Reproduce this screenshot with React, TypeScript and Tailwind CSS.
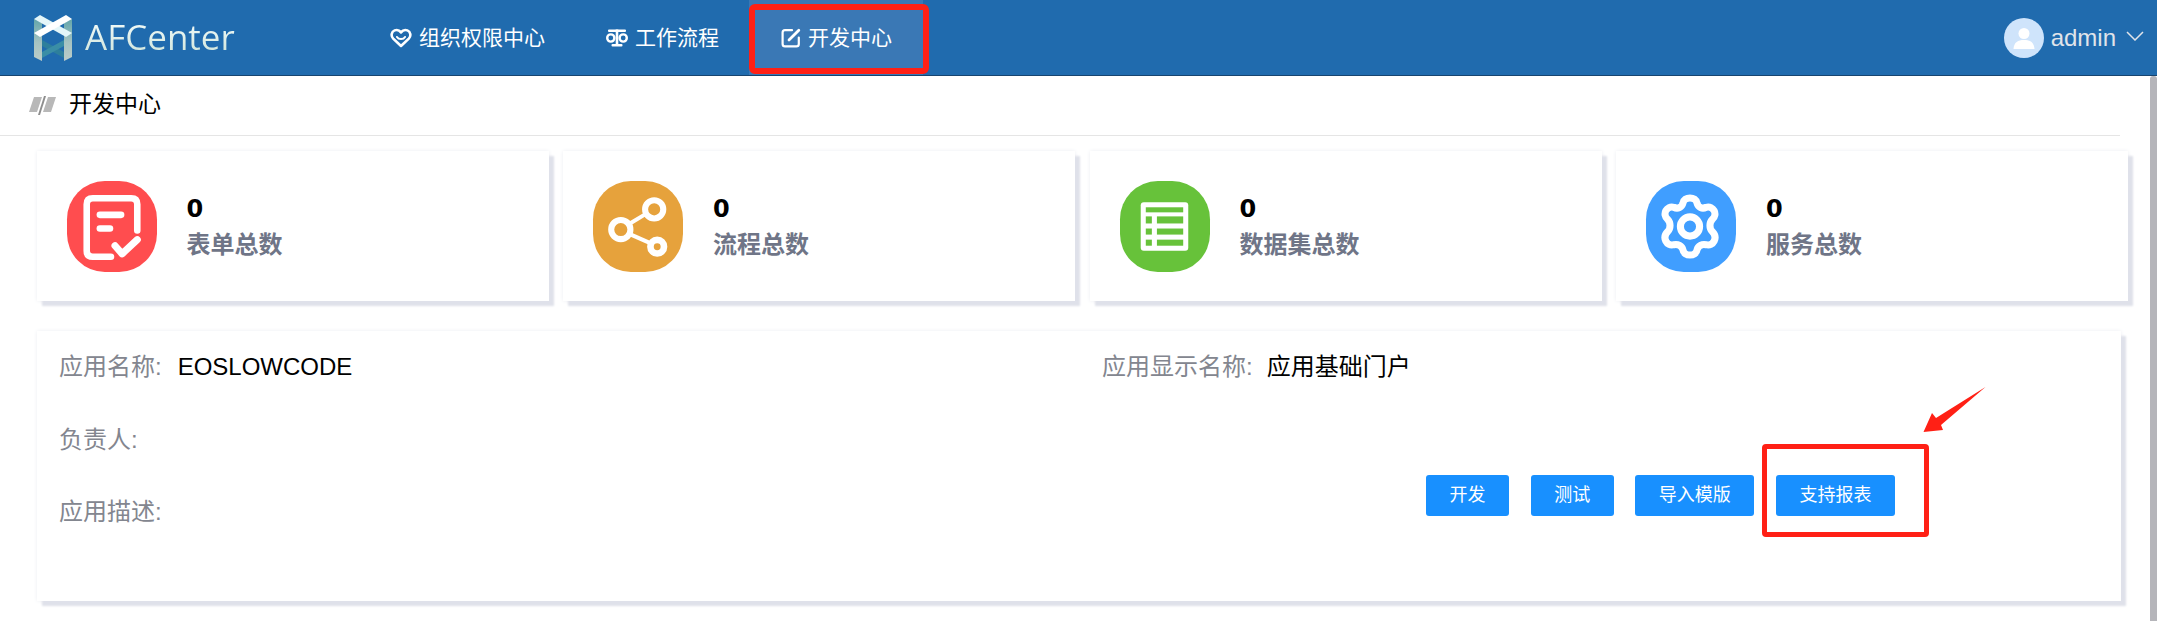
import type { ReactNode } from 'react';

const CJK = "font-['Liberation_Sans','Noto_Sans_CJK_SC',sans-serif]";

function Logo() {
  return (
    <svg width="40" height="48" viewBox="0 0 40 48" className="flex-none">
      <defs>
        <linearGradient id="logoSide" x1="0" y1="0" x2="0" y2="1">
          <stop offset="0" stopColor="#62a5aa" />
          <stop offset="0.55" stopColor="#a5c3c2" />
          <stop offset="1" stopColor="#bccdc8" />
        </linearGradient>
      </defs>
      <path d="M1 5 L9 9 L9 47 L1 43 Z" fill="url(#logoSide)" />
      <path d="M39 5 L31 9 L31 47 L39 43 Z" fill="url(#logoSide)" />
      <path d="M9 26 L31 38 L31 44 L9 32 Z" fill="#2d7f9c" />
      <path d="M31 26 L9 38 L9 44 L31 32 Z" fill="#3a8ea6" />
      <path d="M1 5 L7 1 L39 19 L33 23 Z" fill="#e4f6f9" />
      <path d="M39 5 L33 1 L1 19 L7 23 Z" fill="#ffffff" />
    </svg>
  );
}

function HeartIcon() {
  return (
    <svg width="22" height="20" viewBox="0 0 22 20" fill="none" stroke="white" strokeWidth="2.6" strokeLinecap="round" strokeLinejoin="round">
      <path d="M11 18 L3.2 10.6 C0.6 8 1.4 3.6 4.6 2.4 C7 1.5 9.4 2.3 11 4.4 C12.6 2.3 15 1.5 17.4 2.4 C20.6 3.6 21.4 8 18.8 10.6 Z" />
      <path d="M7 9 C8.5 11.8 13.5 11.8 15 9" strokeWidth="2" />
    </svg>
  );
}

function ScaleIcon() {
  return (
    <svg width="22" height="20" viewBox="0 0 22 20">
      <rect x="2" y="1.5" width="18" height="2.6" rx="1" fill="white" />
      <rect x="9.7" y="1.5" width="2.6" height="15" fill="white" />
      <rect x="5.5" y="16" width="11" height="2.6" rx="1" fill="white" />
      <circle cx="4.8" cy="10" r="3.6" fill="#206bae" stroke="white" strokeWidth="2.4" />
      <circle cx="17.2" cy="10" r="3.6" fill="#206bae" stroke="white" strokeWidth="2.4" />
    </svg>
  );
}

function EditIcon() {
  return (
    <svg width="20" height="20" viewBox="0 0 20 20" fill="none" stroke="white" strokeWidth="2.2" strokeLinecap="round" strokeLinejoin="round">
      <path d="M11 2.2 H4 C2.6 2.2 1.6 3.2 1.6 4.6 V16 C1.6 17.4 2.6 18.4 4 18.4 H15.4 C16.8 18.4 17.8 17.4 17.8 16 V9.6" />
      <path d="M8 12 L17.8 2.2" strokeWidth="2.8" />
    </svg>
  );
}

function FormIcon() {
  return (
    <svg width="90" height="91" viewBox="0 0 88 90" fill="none" stroke="white" strokeWidth="6.5" strokeLinecap="round" strokeLinejoin="round">
      <path d="M43 75 H25 C21 75 19 73 19 69 V23 C19 19 21 17 25 17 H63 C67 17 69 19 69 23 V49" />
      <path d="M32 33.5 H53" />
      <path d="M32 47 H42" />
      <path d="M47 64 L54 72 L69 58" strokeWidth="7" />
    </svg>
  );
}

function ShareIcon() {
  return (
    <svg width="90" height="91" viewBox="0 0 88 90" fill="none" stroke="white">
      <circle cx="60" cy="28" r="9" strokeWidth="6" />
      <circle cx="27" cy="48" r="9.5" strokeWidth="6" />
      <circle cx="63" cy="65" r="6.7" strokeWidth="6.6" />
      <path d="M36 42 L51 33" strokeWidth="4" />
      <path d="M37 53 L55 61" strokeWidth="4" />
    </svg>
  );
}

function TableIcon() {
  return (
    <svg width="90" height="91" viewBox="0 0 88 90">
      <rect x="20" y="21" width="47" height="48" rx="3" fill="white" />
      <g fill="#67c23a">
        <rect x="25" y="26" width="37" height="5" />
        <rect x="25" y="35" width="6" height="7" />
        <rect x="36" y="35" width="26" height="7" />
        <rect x="25" y="47" width="6" height="6" />
        <rect x="36" y="47" width="26" height="6" />
        <rect x="25" y="58" width="6" height="6" />
        <rect x="36" y="58" width="26" height="6" />
      </g>
    </svg>
  );
}

function GearIcon() {
  return (
    <svg width="90" height="91" viewBox="0 0 88 90" fill="none" stroke="white" strokeWidth="7" strokeLinejoin="round">
      <path d="M36 22 C37 15 49 15 50 22 C51 26 55 28 59 26 C66 24 71 33 65 38 C62 41 62 47 65 50 C71 56 66 65 59 63 C55 62 51 64 50 68 C49 75 37 75 36 68 C35 64 31 62 27 63 C20 65 15 56 21 50 C24 47 24 41 21 38 C15 33 20 24 27 26 C31 28 35 26 36 22 Z" />
      <circle cx="43" cy="45" r="9.5" />
    </svg>
  );
}

function NavItem({ icon, label, className = '' }: { icon: ReactNode; label: string; className?: string }) {
  return (
    <div className={`flex items-center gap-[7px] text-[21px] text-white ${className}`}>
      {icon}
      <span>{label}</span>
    </div>
  );
}

function StatCard({ icon, color, label }: { icon: ReactNode; color: string; label: string }) {
  return (
    <div className="flex h-[150px] w-[512px] flex-none items-center bg-white pl-[30px] shadow-[5px_5px_2px_#dfe1ea,0_0_4px_#eceef3]">
      <div className={`h-[91px] w-[90px] flex-none rounded-[42%] ${color}`}>{icon}</div>
      <div className="ml-[30px] flex flex-col pt-[4px]">
        <div className="h-[28px] font-['DejaVu_Sans',sans-serif] text-[24px] leading-[28px] font-bold text-black">0</div>
        <div className="mt-[5px] text-[24px] leading-[34px] font-bold text-[#6f7587]">{label}</div>
      </div>
    </div>
  );
}

function InfoRow({ label, value, className = '', gap = 'ml-[16px]' }: { label: string; value?: string; className?: string; gap?: string }) {
  return (
    <div className={`flex h-[40px] items-center text-[24px] ${className}`}>
      <span className="text-[#83868f]">{label}</span>
      {value && <span className={`${gap} text-black`}>{value}</span>}
    </div>
  );
}

function ActionButton({ label, className = '' }: { label: string; className?: string }) {
  return (
    <button className={`h-[41px] flex-none rounded-[3px] bg-[#1890ff] text-[18px] text-white ${className}`}>{label}</button>
  );
}

export default function App() {
  return (
    <div className={`relative h-screen overflow-hidden bg-white ${CJK}`}>
      {/* Top bar */}
      <header className="flex h-[76px] items-stretch border-b border-[#17446f] bg-[#206bae]">
        <div className="ml-[33px] flex w-[357px] flex-none items-center">
          <Logo />
          <span className="mb-[2px] ml-[12px] bg-gradient-to-b from-[#f4fcfb] to-[#cfe5dc] bg-clip-text font-['Open_Sans',sans-serif] text-[35px] leading-none font-medium text-transparent">
            AFCenter
          </span>
        </div>
        <NavItem icon={<HeartIcon />} label="组织权限中心" />
        <NavItem icon={<ScaleIcon />} label="工作流程" className="ml-[61px]" />
        <NavItem icon={<EditIcon />} label="开发中心" className="ml-[30px] w-[174px] bg-[#3a78b5] pl-[32px]" />
        <div className="ml-auto mr-[13px] flex items-center">
          <div className="flex h-[40px] w-[40px] items-center justify-center rounded-full bg-[#cfe4fb]">
            <svg width="24" height="24" viewBox="0 0 24 24" fill="white">
              <circle cx="12" cy="7.5" r="5.5" />
              <path d="M1.5 23 C2 16 6 14 12 14 C18 14 22 16 22.5 23 Z" />
            </svg>
          </div>
          <span className="ml-[7px] text-[24px] text-[#e0e4ea]">admin</span>
          <svg width="18" height="10" viewBox="0 0 18 10" fill="none" stroke="#e0e4ea" strokeWidth="1.5" className="ml-[10px] mb-[3px]">
            <path d="M1 1 L9 9 L17 1" />
          </svg>
        </div>
      </header>

      <div className="flex h-[calc(100vh-76px)]">
        <main className="min-w-0 flex-1">
          {/* Breadcrumb */}
          <div className="mr-[30px] flex h-[60px] items-center border-b border-[#e5e5e5] pb-[2px] pl-[29px]">
            <svg width="28" height="20" viewBox="0 0 28 20" className="flex-none">
              <path d="M5 2 H13 L8 17 H0 Z" fill="#b8b8b8" />
              <path d="M15 1 L17 1 L11 20 L9 20 Z" fill="#8e8e8e" />
              <path d="M19 2 H27 L22 17 H14 Z" fill="#b8b8b8" />
            </svg>
            <span className="ml-[12px] text-[23px] text-black">开发中心</span>
          </div>

          {/* Stat cards */}
          <div className="ml-[36.5px] mt-[15px] flex gap-[14.5px]">
            <StatCard icon={<FormIcon />} color="bg-[#ff4d4f]" label="表单总数" />
            <StatCard icon={<ShareIcon />} color="bg-[#e6a23c]" label="流程总数" />
            <StatCard icon={<TableIcon />} color="bg-[#67c23a]" label="数据集总数" />
            <StatCard icon={<GearIcon />} color="bg-[#409eff]" label="服务总数" />
          </div>

          {/* App info */}
          <section className="ml-[37px] mr-[29px] mt-[30px] h-[270px] bg-white pl-[22px] pt-[16px] shadow-[5px_5px_2px_#dfe1ea,0_0_4px_#eceef3]">
            <div className="flex">
              <InfoRow label="应用名称:" value="EOSLOWCODE" className="w-[1043px]" />
              <InfoRow label="应用显示名称:" value="应用基础门户" gap="ml-[14px]" />
            </div>
            <InfoRow label="负责人:" className="mt-[33px]" />
            <div className="mt-[32px] flex items-start">
              <InfoRow label="应用描述:" className="w-[1367px]" />
              <div className="-mt-[17px] flex gap-[21.67px]">
                <ActionButton label="开发" className="w-[83px]" />
                <ActionButton label="测试" className="w-[83px]" />
                <ActionButton label="导入模版" className="w-[119px]" />
                <ActionButton label="支持报表" className="w-[119px]" />
              </div>
            </div>
          </section>
        </main>
        {/* Scrollbar */}
        <div className="w-[7px] flex-none rounded-t-[3px] bg-[#b5b5ba]" />
      </div>

      {/* Annotations drawn over the shot */}
      <div className="absolute left-[749px] top-[4px] h-[70px] w-[180px] rounded-[6px] border-[6px] border-[#ff2015]" />
      <div className="absolute left-[1762px] top-[444px] h-[93px] w-[167px] rounded-[4px] border-[5px] border-[#ff2015]" />
      <svg width="66" height="50" viewBox="0 0 66 50" className="absolute left-[1921px] top-[385px]">
        <path d="M2.5 47 L11 28 L15 33 L64.5 2 L20 40 L22 45 Z" fill="#ff2015" />
      </svg>
    </div>
  );
}
